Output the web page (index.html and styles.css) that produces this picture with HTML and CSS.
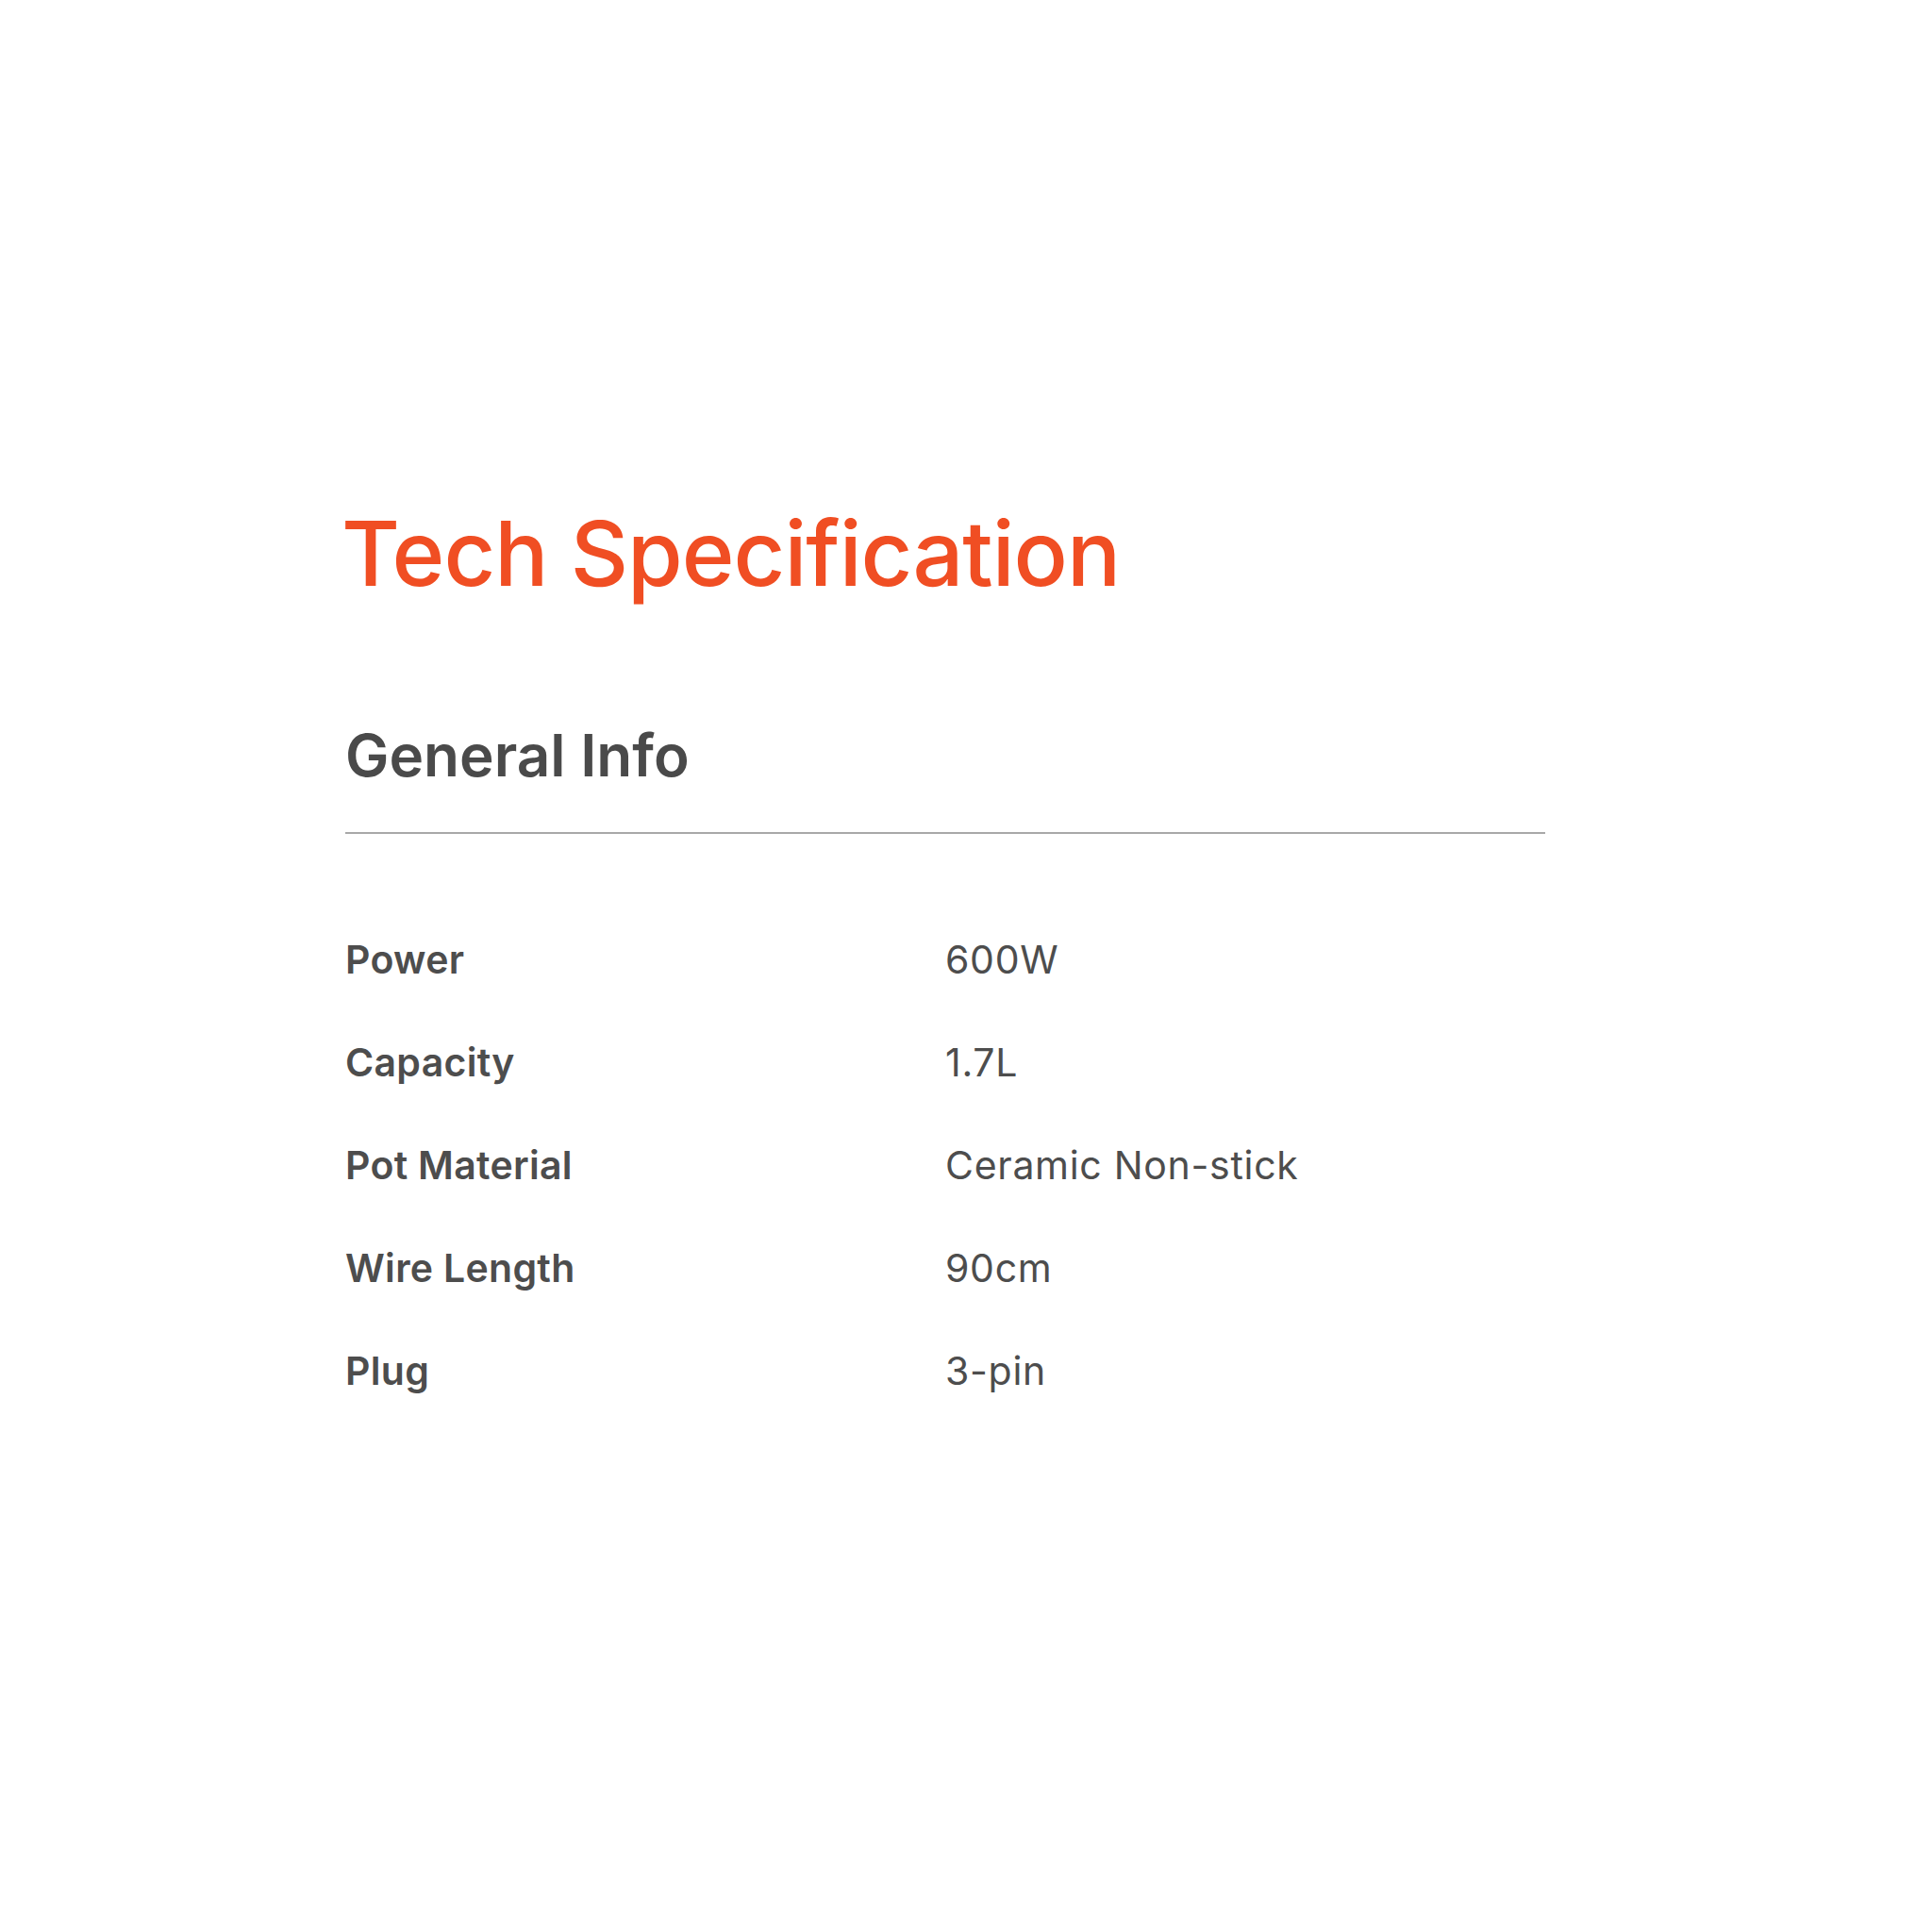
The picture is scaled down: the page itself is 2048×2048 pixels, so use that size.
FILE: index.html
```html
<!DOCTYPE html>
<html lang="en">
<head>
<meta charset="utf-8">
<title>Tech Specification</title>
<link rel="stylesheet" href="styles.css">
</head>
<body>
<main class="spec">
  <h1 class="spec-title">Tech Specification</h1>
  <h2 class="spec-section">General Info</h2>
  <div class="spec-rule"></div>
  <dl class="spec-list">
    <div class="spec-row"><dt>Power</dt><dd>600W</dd></div>
    <div class="spec-row"><dt>Capacity</dt><dd>1.7L</dd></div>
    <div class="spec-row"><dt>Pot Material</dt><dd>Ceramic Non-stick</dd></div>
    <div class="spec-row"><dt>Wire Length</dt><dd>90cm</dd></div>
    <div class="spec-row"><dt>Plug</dt><dd>3-pin</dd></div>
  </dl>
</main>
</body>
</html>
```
FILE: styles.css
```css
html, body {
  margin: 0;
  padding: 0;
  background: #ffffff;
}
body {
  font-family: Inter, "Noto Sans", "Liberation Sans", sans-serif;
  width: 2048px;
  height: 2048px;
}
.spec {
  padding: 539px 0 0 366px;
  width: 1272px;
}
.spec-title {
  margin: 0 0 0 -4px;
  font-size: 95px;
  line-height: 1;
  font-weight: 500;
  color: #f04e23;
  letter-spacing: -1px;
}
.spec-section {
  margin: 136px 0 0 0;
  font-size: 62px;
  line-height: 1;
  font-weight: 600;
  color: #4a4a4a;
  letter-spacing: 0;
}
.spec-rule {
  margin-top: 50px;
  height: 2px;
  background: #a8a8a8;
}
.spec-list {
  margin: 113px 0 0 0;
  display: flex;
  flex-direction: column;
  gap: 68px;
}
.spec-row {
  display: grid;
  grid-template-columns: 636px 1fr;
  font-size: 41px;
  line-height: 1;
  color: #4d4d4d;
}
.spec-row dt {
  font-weight: 600;
  letter-spacing: 0.3px;
}
.spec-row dd {
  margin: 0;
  font-weight: 400;
  letter-spacing: 0.7px;
}
```
